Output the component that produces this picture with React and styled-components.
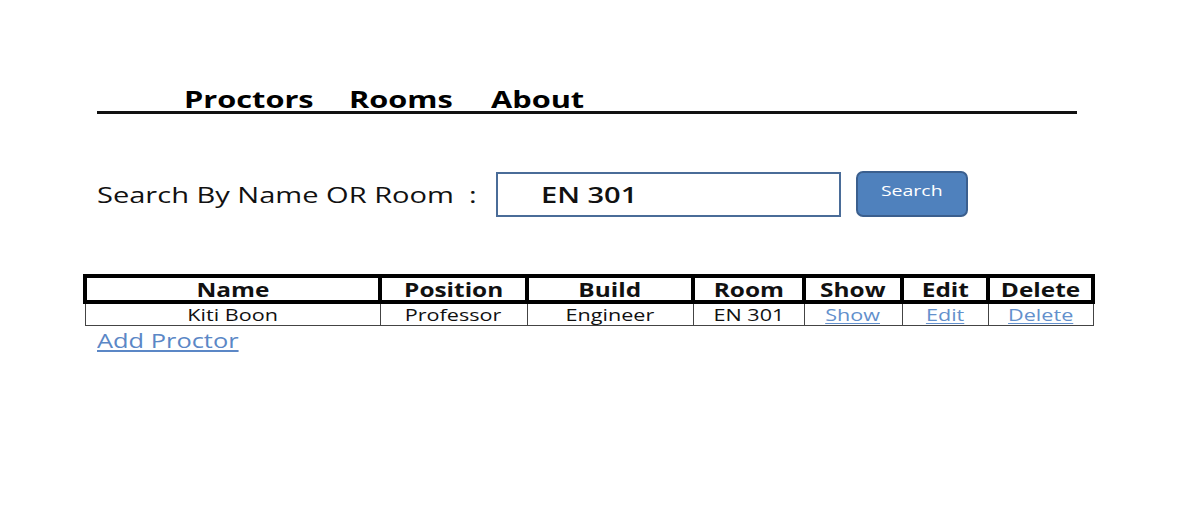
import React from 'react';
import styled, { createGlobalStyle } from 'styled-components';

const Global = createGlobalStyle`
  body {
    margin: 0;
    background: #fff;
    font-family: "Open Sans", "DejaVu Sans", sans-serif;
    color: #111;
  }
`;

// the mockup's lettering is drawn wide, so text is stretched horizontally
const Wide = styled.span`
  display: inline-block;
  white-space: nowrap;
  transform: scaleX(${p => p.$sx || 1.27});
  transform-origin: ${p => p.$origin || 'left'} center;
`;

const Page = styled.div`
  width: 1203px;
  height: 506px;
  padding: 85px 0 0 85px;
  box-sizing: border-box;
`;

const Nav = styled.nav`
  margin-left: 12px;
  width: 980px;
  border-bottom: 3px solid #111;
  display: grid;
  grid-template-columns: 165px 142px auto;
  padding-left: 87px;
  box-sizing: border-box;
  height: 29px;
  align-items: end;
`;

const NavLink = styled.span`
  font-size: 24px;
  font-weight: 700;
  line-height: 24px;
  color: #000;
`;

const SearchRow = styled.div`
  margin: 57px 0 0 12px;
  display: flex;
  align-items: center;
`;

const Label = styled.span`
  font-size: 22px;
  width: 399px;
`;

const Input = styled.div`
  width: 345px;
  height: 45px;
  border: 2px solid #4a6c98;
  box-sizing: border-box;
  padding-left: 43px;
  display: flex;
  align-items: center;
  font-size: 22px;
  font-weight: 600;
`;

const Button = styled.button`
  margin-left: 15px;
  width: 112px;
  height: 46px;
  border: 2px solid #3b5f8e;
  border-radius: 7px;
  background: #4f81bd;
  color: #fff;
  font-family: inherit;
  font-size: 15px;
  padding: 0 0 8px;
`;

const Table = styled.table`
  margin: 57px 0 0 -2px;
  border-collapse: collapse;
  table-layout: fixed;
  width: 1006px;
`;

const Th = styled.th`
  border: 4px solid #000;
  font-size: 20px;
  font-weight: 700;
  height: 22px;
  padding: 0;
  line-height: 21px;
`;

const Td = styled.td`
  border: 1px solid #444;
  font-size: 17px;
  text-align: center;
  padding: 0;
  height: 21px;
  line-height: 21px;
`;

const Link = styled.a`
  display: inline-block;
  white-space: nowrap;
  color: ${p => p.$big ? '#5b87c6' : '#6390cc'};
  text-decoration: underline;
  text-underline-offset: 2px;
  font-size: ${p => p.$big ? '20px' : '17px'};
  transform: scaleX(1.27);
  transform-origin: ${p => p.$big ? 'left' : 'center'} center;
`;

const Footer = styled.div`
  margin: 3px 0 0 12px;
  line-height: 24px;
`;

const cols = [295, 147, 166, 111, 98, 86, 105];
const heads = ['Name', 'Position', 'Build', 'Room', 'Show', 'Edit', 'Delete'];
const row = ['Kiti Boon', 'Professor', 'Engineer', 'EN 301'];
const actions = ['Show', 'Edit', 'Delete'];

export default function App() {
  return (
    <Page>
      <Global />
      <Nav>
        <NavLink><Wide $sx={1.28}>Proctors</Wide></NavLink>
        <NavLink><Wide $sx={1.28}>Rooms</Wide></NavLink>
        <NavLink><Wide $sx={1.28}>About</Wide></NavLink>
      </Nav>
      <SearchRow>
        <Label><Wide $sx={1.32}>Search By Name OR Room&nbsp;&nbsp;:</Wide></Label>
        <Input><Wide $sx={1.32}>EN 301</Wide></Input>
        <Button><Wide $sx={1.3} $origin="center">Search</Wide></Button>
      </SearchRow>
      <Table>
        <colgroup>
          {cols.map((w, i) => <col key={i} style={{ width: w }} />)}
        </colgroup>
        <thead>
          <tr>
            {heads.map(h => (
              <Th key={h}><Wide $sx={1.22} $origin="center">{h}</Wide></Th>
            ))}
          </tr>
        </thead>
        <tbody>
          <tr>
            {row.map(c => (
              <Td key={c}><Wide $origin="center">{c}</Wide></Td>
            ))}
            {actions.map(a => (
              <Td key={a}><Link>{a}</Link></Td>
            ))}
          </tr>
        </tbody>
      </Table>
      <Footer>
        <Link $big>Add Proctor</Link>
      </Footer>
    </Page>
  );
}
